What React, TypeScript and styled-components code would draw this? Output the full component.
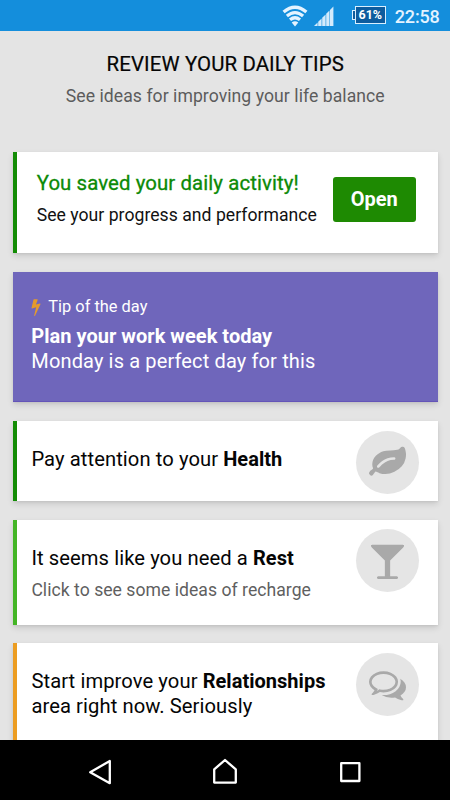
import React from "react";
import styled, { createGlobalStyle } from "styled-components";

const GlobalStyle = createGlobalStyle`
  body {
    margin: 0;
    background: #e4e4e4;
    font-family: Roboto, "Liberation Sans", sans-serif;
  }
`;

const Screen = styled.div`
  display: flex;
  flex-direction: column;
  width: 450px;
  height: 800px;
  overflow: hidden;
  background: #e4e4e4;
  color: #050505;
`;

const StatusBar = styled.header`
  flex: none;
  display: flex;
  align-items: flex-start;
  justify-content: flex-end;
  box-sizing: border-box;
  height: 31px;
  padding: 5px 10.5px 0 0;
  background: #148edc;
`;

const WifiIcon = styled.svg`
  width: 26px;
  height: 22px;
  margin-right: 6px;
`;

const SignalIcon = styled.svg`
  width: 20px;
  height: 20px;
  margin: 1px 18px 0 0;
`;

const Battery = styled.div`
  display: flex;
  align-items: center;
  margin: 1px 9px 0 0;
`;

const BatteryTip = styled.span`
  box-sizing: border-box;
  width: 3px;
  height: 10px;
  border: 1px solid #d9efff;
  border-right: 0;
  background: #0d5c9e;
`;

const BatteryBody = styled.span`
  box-sizing: border-box;
  width: 31px;
  height: 18px;
  border: 1px solid #d9efff;
  background: #0d5c9e;
  color: #fff;
  font-size: 12.5px;
  font-weight: 700;
  line-height: 16.5px;
  text-align: center;
`;

const Clock = styled.time`
  color: #e4f3ff;
  font-size: 18px;
  font-weight: 500;
  line-height: 23px;
  letter-spacing: -0.2px;
`;

const Content = styled.main`
  flex: 1;
  min-height: 0;
  overflow: hidden;
  display: flex;
  flex-direction: column;
  padding: 20px 12.5px 0 13px;
`;

const Heading = styled.h1`
  flex: none;
  margin: 0;
  font-size: 20.4px;
  font-weight: 400;
  line-height: 26px;
  letter-spacing: 0.13px;
  text-align: center;
  -webkit-text-stroke: 0.2px currentColor;
`;

const Subheading = styled.p`
  flex: none;
  margin: 8px 0 45px;
  color: #5c5c5c;
  font-size: 17.6px;
  line-height: 22px;
  letter-spacing: 0.06px;
  text-align: center;
`;

const Card = styled.section<{ $accent: string; $height: number; $top: number }>`
  flex: none;
  display: flex;
  justify-content: space-between;
  box-sizing: border-box;
  height: ${(p) => p.$height}px;
  margin-bottom: 18.7px;
  padding: ${(p) => p.$top}px 0 0 14.4px;
  border-left: 4px solid ${(p) => p.$accent};
  background: #fff;
  box-shadow: 0 3px 6px rgba(0, 0, 0, 0.12), 0 1px 2px rgba(0, 0, 0, 0.06);
`;

const SavedCard = styled(Card)`
  padding-left: 19.7px;
`;

const TipCard = styled.section`
  flex: none;
  box-sizing: border-box;
  height: 130px;
  margin-bottom: 19px;
  padding: 25px 18.3px 0;
  background: #6f66bb;
  color: #fff;
  box-shadow: 0 3px 6px rgba(0, 0, 0, 0.12), 0 1px 2px rgba(0, 0, 0, 0.06),
    inset 0 -1px 0 #6454b8;
`;

const TipLabel = styled.div`
  display: flex;
  align-items: center;
  height: 20px;
  margin-bottom: 7px;
  font-size: 16.4px;
  line-height: 20px;
`;

const BoltIcon = styled.svg`
  width: 18px;
  height: 18px;
  margin: 0 3.3px 0 -4.3px;
  fill: #e49a2c;
`;

const TipText = styled.p<{ $strong?: boolean }>`
  margin: 0;
  font-size: 20px;
  font-weight: ${(p) => (p.$strong ? 700 : 400)};
  line-height: 25px;
  letter-spacing: ${(p) => (p.$strong ? 0.02 : 0.14)}px;
`;

const Copy = styled.div`
  white-space: nowrap;
`;

const SavedTitle = styled.h2`
  margin: 0 0 8px;
  color: #0c8a06;
  font-size: 20.4px;
  font-weight: 400;
  line-height: 26px;
  letter-spacing: 0.09px;
  -webkit-text-stroke: 0.3px currentColor;
`;

const Title = styled.h2`
  margin: 0;
  font-size: 20.2px;
  font-weight: 400;
  line-height: 25px;
  letter-spacing: 0.08px;

  b {
    font-size: 20px;
    font-weight: 700;
    letter-spacing: 0.03px;
  }
`;

const Detail = styled.p<{ $muted?: boolean }>`
  margin: 0;
  color: ${(p) => (p.$muted ? "#5f5f5f" : "#111")};
  font-size: 17.6px;
  line-height: 22px;
  letter-spacing: 0.03px;
`;

const MutedDetail = styled(Detail)`
  margin-top: 8px;
`;

const OpenButton = styled.button`
  flex: none;
  width: 83.5px;
  height: 45px;
  margin: 7px 21.5px 0 0;
  padding: 0;
  border: 0;
  border-radius: 3px;
  background: #1e8a02;
  color: #fff;
  font: 700 20px/45px Roboto, "Liberation Sans", sans-serif;
`;

const IconCircle = styled.div`
  flex: none;
  display: flex;
  align-items: center;
  justify-content: center;
  width: 63px;
  height: 63px;
  margin: -16.3px 18.5px 0 0;
  border-radius: 50%;
  background: #e5e5e5;

  svg {
    width: 37px;
    height: 37px;
    fill: #a9a9a9;
  }
`;

const NavBar = styled.nav`
  flex: none;
  display: grid;
  grid-template-columns: repeat(3, 125px);
  justify-content: center;
  align-items: center;
  justify-items: center;
  height: 60px;
  background: #000;
`;

const NavIcon = styled.svg`
  width: 30px;
  height: 30px;
  fill: none;
  stroke: #fff;
  stroke-width: 2.3;
  stroke-linejoin: round;
`;

const LEAF =
  "M1280 704q0-26-19-45t-45-19q-172 0-318 49.5t-259.5 134-235.5 219.5q-19 21-19 45 0 26 19 45t45 19q24 0 45-19 27-24 74-71t67-66q137-124 268.5-176t313.5-52q26 0 45-19t19-45zm512-198q0 95-20 193-46 224-184.5 383t-357.5 268q-214 108-438 108-148 0-286-47-15-5-88-42t-96-37q-16 0-39.5 32t-45 70-52.5 70-60 32q-43 0-63.5-17.5t-45.5-59.5q-2-4-6-11t-5.5-10-3-9.5-1.5-13.5q0-35 31-73.5t68-65.5 68-56 31-48q0-4-14-38t-16-44q-9-51-9-104 0-115 43.5-220t119-184.5 170.5-139 204-95.5q55-18 145-25.5t179.5-9 178.5-6 163.5-24 113.5-56.5l29.5-29.5 29.5-28 27-20 36.5-16 43.5-4.5q39 0 70.5 46t47.5 112 24 124 8 96z";
const GLASS =
  "M1699 186q0 35-43 78l-632 632v768h320q26 0 45 19t19 45-19 45-45 19h-896q-26 0-45-19t-19-45 19-45 45-19h320v-768l-632-632q-43-43-43-78 0-23 18-36.5t38-17.5 43-4h1408q23 0 43 4t38 17.5 18 36.5z";
const COMMENTS =
  "M704 384q-153 0-286 52t-211.5 141-78.5 191q0 82 53 158t149 132l97 56-35 84q34-20 62-39l44-31 53 10q78 14 153 14 153 0 286-52t211.5-141 78.5-191-78.5-191-211.5-141-286-52zm0-128q191 0 353.5 68.5t256.5 186.5 94 257-94 257-256.5 186.5-353.5 68.5q-86 0-176-16-124 88-278 128-36 9-86 16h-3q-11 0-20.5-8t-11.5-21q-1-3-1-6.5t.5-6.5 2-6l2.5-5 3.5-5.5 4-5 4.5-5 4-4.5q5-6 23-25t26-29.5 22.5-29 25-38.5 20.5-44q-124-72-195-177t-71-224q0-139 94-257t256.5-186.5 353.5-68.5zm822 1169q10 24 20.5 44t25 38.5 22.5 29 26 29.5 23 25q1 1 4 4.5t4.5 5 4 5 3.5 5.5l2.5 5 2 6 .5 6.5-1 6.5q-3 14-13 22t-22 7q-50-7-86-16-154-40-278-128-90 16-176 16-271 0-472-132 58 4 88 4 161 0 309-45t264-129q125-92 192-212t67-254q0-77-23-152 129 71 204 178t75 230q0 120-71 224.5t-195 176.5z";
const BOLT =
  "M1333 566q18 20 7 44l-540 1157q-13 25-42 25-4 0-14-2-17-5-25.5-19t-4.5-30l197-808-406 101q-4 1-12 1-18 0-31-11-18-15-13-39l201-825q4-14 16-23t28-9h328q19 0 32 12.5t13 29.5q0 8-5 18l-171 463 396-98q8-2 12-2 19 0 34 15z";

function CircleIcon({ path }: { path: string }) {
  return (
    <IconCircle>
      <svg viewBox="0 0 1792 1792">
        <path d={path} />
      </svg>
    </IconCircle>
  );
}

export default function App() {
  return (
    <Screen>
      <GlobalStyle />
      <StatusBar>
        <WifiIcon viewBox="0 0 26 22" fill="none" stroke="#e4f3ff" strokeWidth="3.3">
          <path d="M1.6 7Q13-2.6 24.4 7" />
          <path d="M4.9 11Q13 4.2 21.1 11" />
          <path d="M8 14.8Q13 10.8 18 14.8" />
          <path d="M9.7 17.4Q13 14.9 16.3 17.4L13 21.4Z" fill="#e4f3ff" stroke="none" />
        </WifiIcon>
        <SignalIcon viewBox="0 0 20 20" fill="#d4ebfc">
          <path d="M0 20L3.6 16.4V20ZM4.2 15.8L7.6 12.4V20H4.2ZM8.2 11.8L11.6 8.4V20H8.2ZM12.2 7.8L15.5 4.5V20H12.2ZM16 4L19.4.6V20H16Z" />
        </SignalIcon>
        <Battery>
          <BatteryTip />
          <BatteryBody>61%</BatteryBody>
        </Battery>
        <Clock>22:58</Clock>
      </StatusBar>

      <Content>
        <Heading>REVIEW YOUR DAILY TIPS</Heading>
        <Subheading>See ideas for improving your life balance</Subheading>

        <SavedCard $accent="#138c05" $height={101.3} $top={18}>
          <Copy>
            <SavedTitle>You saved your daily activity!</SavedTitle>
            <Detail>See your progress and performance</Detail>
          </Copy>
          <OpenButton>Open</OpenButton>
        </SavedCard>

        <TipCard>
          <TipLabel>
            <BoltIcon viewBox="0 0 1792 1792">
              <path d={BOLT} />
            </BoltIcon>
            Tip of the day
          </TipLabel>
          <TipText $strong>Plan your work week today</TipText>
          <TipText>Monday is a perfect day for this</TipText>
        </TipCard>

        <Card $accent="#138c05" $height={80} $top={26}>
          <Title>
            Pay attention to your <b>Health</b>
          </Title>
          <CircleIcon path={LEAF} />
        </Card>

        <Card $accent="#44b526" $height={104.9} $top={26}>
          <Copy>
            <Title>
              It seems like you need a <b>Rest</b>
            </Title>
            <MutedDetail $muted>Click to see some ideas of recharge</MutedDetail>
          </Copy>
          <CircleIcon path={GLASS} />
        </Card>

        <Card $accent="#ec9d22" $height={125} $top={26}>
          <Title>
            Start improve your <b>Relationships</b>
            <br />
            area right now. Seriously
          </Title>
          <CircleIcon path={COMMENTS} />
        </Card>
      </Content>

      <NavBar>
        <NavIcon viewBox="0 0 30 30">
          <path d="M5.2 17.2L24.8 6V28.2Z" />
        </NavIcon>
        <NavIcon viewBox="0 0 30 30">
          <path d="M4.2 27.6V14.4L15 5L25.8 14.4V27.6Z" />
        </NavIcon>
        <NavIcon viewBox="0 0 30 30">
          <path d="M6.2 8.2H24.4V26H6.2Z" />
        </NavIcon>
      </NavBar>
    </Screen>
  );
}
